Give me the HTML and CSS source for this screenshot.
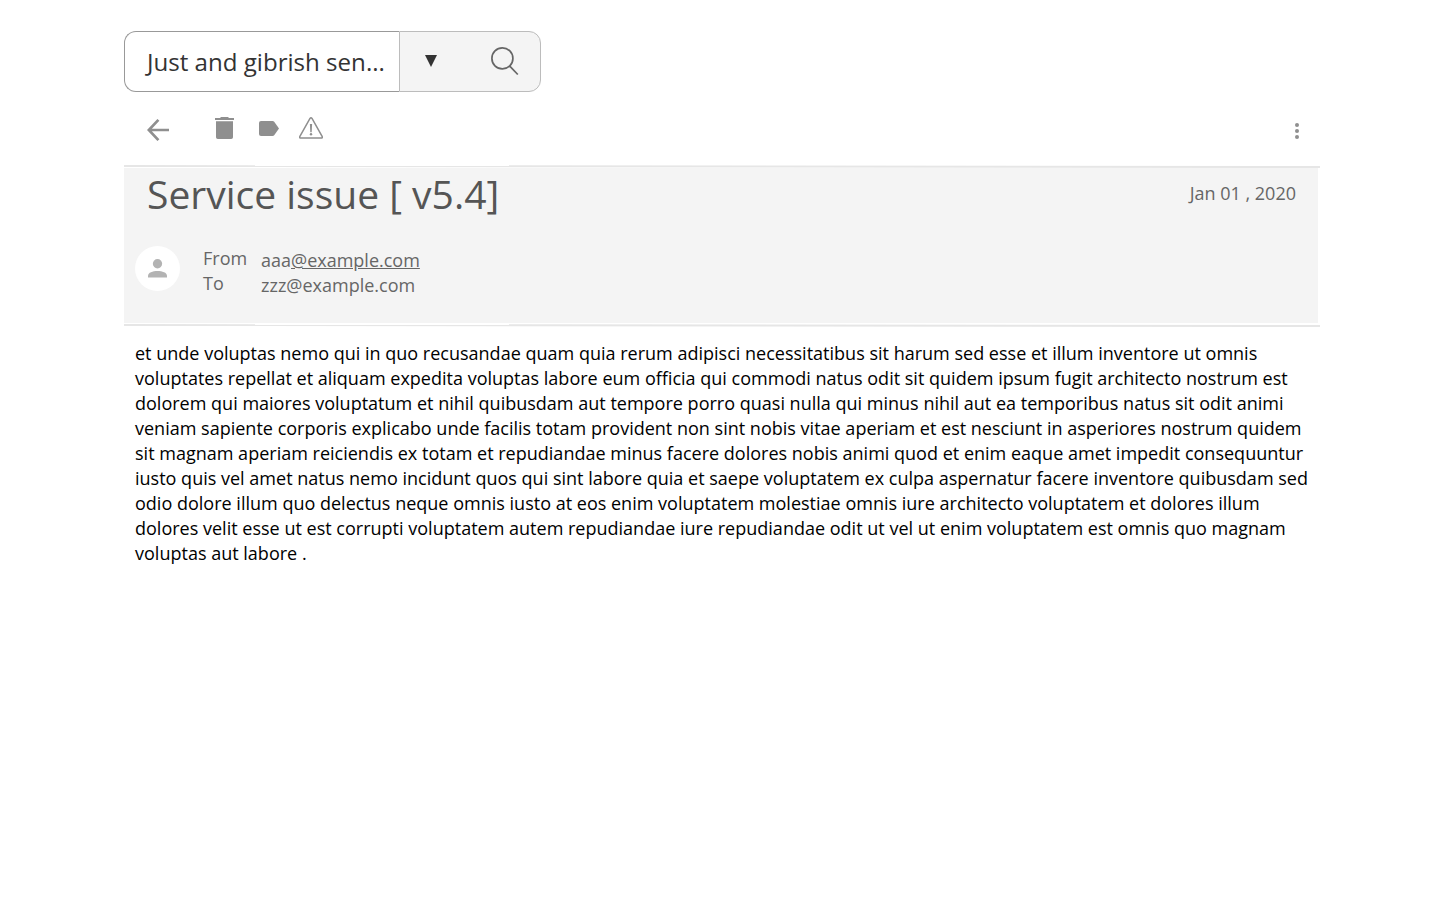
FILE: index.html
```html
<!DOCTYPE html>
<html lang="en">
<head>
<meta charset="utf-8">
<title>Service issue</title>
<link rel="stylesheet" href="styles.css">
</head>
<body>
<main class="page">
  <div class="search">
    <div class="search-field">Just and gibrish sen...</div>
    <div class="search-actions">
      <svg class="caret" width="12" height="12" viewBox="0 0 12 12"><path d="M0 0H12L6 12Z" fill="#333"/></svg>
      <svg class="lens" width="28" height="29" viewBox="0.5 0.5 28 29" fill="none" stroke="#666" stroke-width="1.7"><circle cx="11.9" cy="11.9" r="10.5"/><path d="M19 19.3L27.3 28"/></svg>
    </div>
  </div>
  <div class="toolbar">
    <svg class="back" width="22" height="22" viewBox="0 0 22 22" fill="none" stroke="#8f8f8f" stroke-width="2.7"><path d="M11.4 .9L1.8 11L11.4 21.1M1.6 11H22"/></svg>
    <svg class="trash" width="19" height="22" viewBox="0 0 19 22" fill="#8f8f8f"><path d="M0 1H5L6 0H13L14 1H19V3H0ZM1 4.2H18V20.2Q18 22 16.2 22H2.8Q1 22 1 20.2Z"/></svg>
    <svg class="tag" width="20" height="15" viewBox="0 0 20 15" fill="#8f8f8f"><path d="M2 0H13.6Q14.6 0 15.2.8L20 7.5L15.2 14.2Q14.6 15 13.6 15H2Q0 15 0 13V2Q0 0 2 0Z"/></svg>
    <svg class="warn" width="24" height="22" viewBox="0 0 24 22" fill="none" stroke="#8f8f8f" stroke-width="1.5"><path d="M11 1.5Q12 0 13 1.5L23.1 19.3Q23.8 21.1 22.2 21.1H1.8Q.2 21.1 .9 19.3Z"/><path d="M10.9 7H13.1L12.7 15.2H11.3Z" fill="#8f8f8f" stroke="none"/><circle cx="12" cy="17.3" r="1.2" fill="#8f8f8f" stroke="none"/></svg>
    <svg class="more" width="4" height="16" viewBox="0 0 4 16" fill="#8f8f8f"><circle cx="2" cy="2" r="2"/><circle cx="2" cy="8" r="2"/><circle cx="2" cy="14" r="2"/></svg>
  </div>
  <svg class="rule" width="1196" height="4" viewBox="0 0 1196 4"><path d="M0 2L1196 3" stroke="#e6e6e6" stroke-width="1.9"/></svg>
  <header class="message">
    <div class="heading">
      <h1 class="title">Service issue [ v5.4]</h1>
      <time class="date">Jan 01 , 2020</time>
    </div>
    <div class="people">
      <div class="avatar"><svg width="19" height="19" viewBox="0 0 18 18" fill="#b3b3b3"><circle cx="9" cy="4.5" r="4.4"/><path d="M0 17.6V15.8C0 9.8 18 9.8 18 15.8V17.6Z"/></svg></div>
      <div class="labels"><div>From</div><div>To</div></div>
      <div class="addresses"><div>aaa<span class="link">@example.com</span></div><div>zzz@example.com</div></div>
    </div>
  </header>
  <svg class="rule" width="1196" height="4" viewBox="0 0 1196 4"><path d="M0 2L1196 3" stroke="#e6e6e6" stroke-width="1.9"/></svg>
  <p class="body">et unde voluptas nemo qui in quo recusandae quam quia rerum adipisci necessitatibus sit harum sed esse et illum inventore ut omnis<br>voluptates repellat et aliquam expedita voluptas labore eum officia qui commodi natus odit sit quidem ipsum fugit architecto nostrum est<br>dolorem qui maiores voluptatum et nihil quibusdam aut tempore porro quasi nulla qui minus nihil aut ea temporibus natus sit odit animi<br>veniam sapiente corporis explicabo unde facilis totam provident non sint nobis vitae aperiam et est nesciunt in asperiores nostrum quidem<br>sit magnam aperiam reiciendis ex totam et repudiandae minus facere dolores nobis animi quod et enim eaque amet impedit consequuntur<br>iusto quis vel amet natus nemo incidunt quos qui sint labore quia et saepe voluptatem ex culpa aspernatur facere inventore quibusdam sed<br>odio dolore illum quo delectus neque omnis iusto at eos enim voluptatem molestiae omnis iure architecto voluptatem et dolores illum<br>dolores velit esse ut est corrupti voluptatem autem repudiandae iure repudiandae odit ut vel ut enim voluptatem est omnis quo magnam<br>voluptas aut labore .</p>
</main>
</body>
</html>
```
FILE: styles.css
```css
* { box-sizing: border-box; }
body {
  margin: 0;
  background: #fff;
  font-family: "Open Sans", "Noto Sans", sans-serif;
}
.page {
  width: 1196px;
  margin-left: 124px;
  padding-top: 31px;
}
.search {
  display: flex;
  width: 417px;
  height: 61px;
}
.search-field {
  width: 275px;
  padding-left: 22px;
  border: 1px solid #999;
  border-right: 0;
  border-radius: 12px 0 0 12px;
  font-size: 24.1px;
  line-height: 59px;
  color: #333;
  white-space: nowrap;
}
.search-actions {
  display: flex;
  width: 142px;
  border: 1px solid #bcbcbc;
  border-radius: 0 12px 12px 0;
  background: #f4f4f4;
}
.caret { margin: 23px 0 0 25px; }
.lens { margin: 15px 0 0 54px; }
.toolbar {
  display: flex;
  align-items: flex-start;
  height: 72px;
  padding: 25px 21px 0 23px;
}
.back { margin-top: 2px; }
.trash { margin-left: 46px; }
.tag { margin: 4px 0 0 25px; }
.warn { margin-left: 20px; }
.more { margin: 6px 0 0 auto; }
.rule { display: block; }
.message {
  width: 1194px;
  height: 155px;
  background: #f4f4f4;
}
.heading {
  display: flex;
  justify-content: space-between;
  padding: 0 22px 0 23px;
}
.title {
  margin: 0;
  font-size: 39px;
  font-weight: 400;
  line-height: 52px;
  color: #555;
}
.date {
  padding-top: 13px;
  font-size: 18px;
  line-height: 25px;
  color: #666;
}
.people {
  display: flex;
  margin-top: 26px;
  padding-left: 11px;
  font-size: 18px;
  line-height: 25px;
  color: #666;
}
.avatar {
  display: flex;
  align-items: center;
  justify-content: center;
  width: 45px;
  height: 45px;
  border-radius: 50%;
  background: #fff;
}
.labels { width: 58px; margin-left: 23px; }
.addresses { padding-top: 2px; }
.link { text-decoration: underline; }
.body {
  margin: 14px 0 0 11px;
  font-size: 18.025px;
  line-height: 25px;
  color: #000;
  white-space: nowrap;
}
```
